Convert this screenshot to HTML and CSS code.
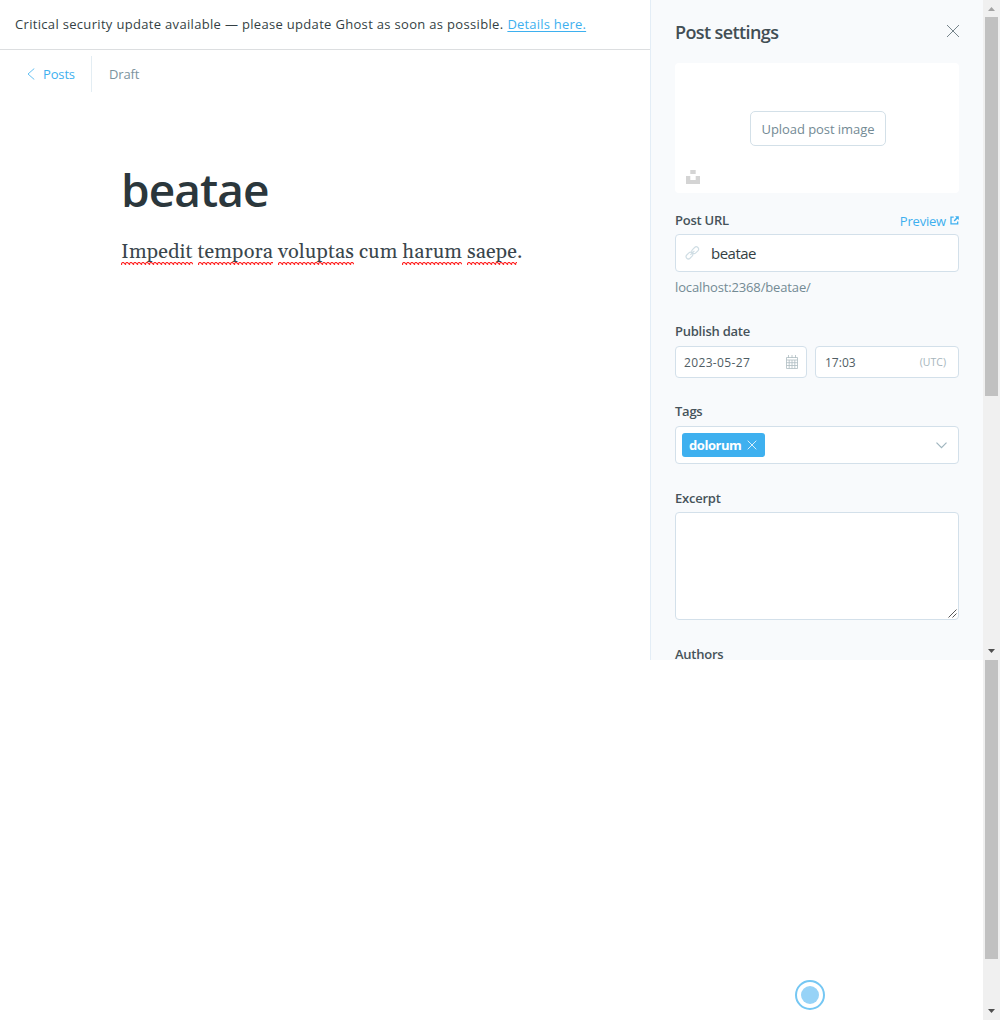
FILE: index.html
```html
<!DOCTYPE html>
<html lang="en">
<head>
<meta charset="utf-8">
<title>Post editor</title>
<link rel="stylesheet" href="styles.css">
</head>
<body>
<div class="app">
  <main class="editor">
    <div class="alert"><span class="alert-text">Critical security update available — please update Ghost as soon as possible.</span><a class="alert-link" href="#">Details here.</a></div>
    <header class="toolbar">
      <a class="back" href="#"><svg width="8" height="12" viewBox="0 0 8 12"><path d="M7.3.5 1 6l6.3 5.5" fill="none" stroke="#3eb0ef" stroke-width=".8"/></svg><span class="back-text">Posts</span></a>
      <span class="status">Draft</span>
    </header>
    <article class="post">
      <h1><span class="title">beatae</span></h1>
      <p class="body-text"><span class="misspelt">Impedit</span> <span class="misspelt">tempora</span> <span class="misspelt">voluptas</span> cum <span class="misspelt">harum</span> <span class="misspelt">saepe</span>.</p>
    </article>
  </main>
  <aside class="settings">
    <div class="settings-head"><h2>Post settings</h2><svg width="14" height="14" viewBox="0 0 14 14"><path d="m1 1 12 12M13 1 1 13" stroke="#54666d" stroke-width=".8"/></svg></div>
    <div class="uploader">
      <button class="upload" type="button"><span class="upload-text">Upload post image</span></button>
      <svg class="unsplash" width="14" height="14" viewBox="0 0 14 14"><path d="M4.3 0h5.4v4H4.3zM0 6h4.3v4h5.4V6H14v8H0z" fill="#d4d4d4"/></svg>
    </div>
    <div class="url-head"><span class="label l-url">Post URL</span><a class="preview" href="#"><span class="preview-text">Preview</span><svg width="9" height="9" viewBox="0 0 9 9"><path d="M3.7 1.2H1v6.7h6.7V5.4" fill="none" stroke="#3eb0ef" stroke-width="1.3"/><path d="M5 .2h3.8V4L7.4 2.7 4.7 5.4l-1-1 2.7-2.8z" fill="#3eb0ef"/></svg></a></div>
    <div class="field url-field"><svg width="15" height="14" viewBox="0 0 15 14"><g fill="none" stroke="#cfdde4" stroke-width="1.1"><rect x="-3.6" y="-2.3" width="7.6" height="4.6" rx="2.3" transform="translate(4.3 9.7) rotate(-45)"/><rect x="-3.8" y="-2.3" width="7.6" height="4.6" rx="2.3" transform="translate(10.2 4.2) rotate(-45)"/><path d="m5.4 8.8 4-4"/></g></svg><span class="url-value">beatae</span></div>
    <div class="hint"><span class="hint-text">localhost:2368/beatae/</span></div>
    <div class="label l-date"><span class="date-label">Publish date</span></div>
    <div class="dates">
      <div class="field date-field"><span class="date-value">2023-05-27</span><svg width="12" height="14" viewBox="0 0 12 14"><path d="M.5 2.5h11v11H.5zM.5 5h11M3.2 5v8.5M6 5v8.5M8.8 5v8.5M.5 7.7h11M.5 10.5h11M2.5 0v3M6 0v3M9.5 0v3" fill="none" stroke="#aebcc2" stroke-width=".8"/></svg></div>
      <div class="field time-field"><span class="time-value">17:03</span><span class="utc">(UTC)</span></div>
    </div>
    <div class="label l-tags"><span class="tags-label">Tags</span></div>
    <div class="field tags-field"><span class="tag"><span class="tag-text">dolorum</span><svg width="10" height="10" viewBox="0 0 10 10"><path d="m.7.7 8.6 8.6m0-8.6L.7 9.3" stroke="#fff" stroke-width=".8"/></svg></span><svg width="11" height="7" viewBox="0 0 11 7"><path d="m.5.7 5 5 5-5" fill="none" stroke="#9fb5be" stroke-width="1.2"/></svg></div>
    <div class="label l-excerpt"><span class="excerpt-label">Excerpt</span></div>
    <div class="field excerpt"><svg width="9" height="9" viewBox="0 0 9 9"><path d="m.5 8.5 8-8m-4 8 4-4" stroke="#444" stroke-width=".9"/></svg></div>
    <div class="label l-authors"><span class="authors-label">Authors</span></div>
  </aside>
  <div class="rail">
    <div class="scroll upper"><svg class="up" width="7" height="4" viewBox="0 0 7 4"><path d="m0 4 3.5-4L7 4z" fill="#a3a3a3"/></svg><i class="thumb"></i><svg width="7" height="4" viewBox="0 0 7 4"><path d="m0 0 3.5 4L7 0z" fill="#505050"/></svg></div>
    <div class="scroll lower"><i class="thumb"></i><svg width="7" height="4" viewBox="0 0 7 4"><path d="m0 0 3.5 4L7 0z" fill="#505050"/></svg></div>
  </div>
  <svg class="beacon" width="30" height="30" viewBox="0 0 30 30"><circle cx="15" cy="15" r="14" fill="#fff" stroke="#75c7f3" stroke-width="2"/><circle cx="15" cy="15" r="9" fill="#97d3f7"/></svg>
</div>
</body>
</html>
```
FILE: styles.css
```css
* { box-sizing: border-box; }
body { margin: 0; background: #fff; color: #343f44; font-family: "Open Sans", "Noto Sans", sans-serif; font-size: 13px; }
h1, h2, p { margin: 0; }
a { color: #3eb0ef; text-decoration: none; }
svg { display: block; flex: none; }
.app { position: relative; display: grid; grid-template-columns: 650px 333px 17px; width: 1000px; height: 1020px; overflow: hidden; white-space: nowrap; }
.alert { display: flex; gap: 4px; height: 50px; padding-left: 15px; border-bottom: 1px solid #dcdee0; line-height: 48px; letter-spacing: .32px; }
.alert-link { text-decoration: underline; text-underline-offset: 2px; letter-spacing: .21px; }
.toolbar { display: flex; height: 50px; padding: 6px 0 0 27px; line-height: 36px; letter-spacing: -.15px; }
.back { display: flex; align-items: center; gap: 8px; width: 65px; height: 36px; border-right: 1px solid #e3edf3; }
.status { margin-left: 17px; color: #7c939d; }
.post { padding: 60px 0 0 121px; }
h1 { height: 60px; line-height: 58px; font-size: 46px; font-weight: 600; letter-spacing: -.95px; color: #2b373c; }
.body-text { margin-top: 17px; line-height: 30px; font-family: Gelasio, Georgia, "DejaVu Serif", "Liberation Serif", serif; font-size: 20px; letter-spacing: .12px; color: #3a464c; }
.misspelt { background: url("data:image/svg+xml,%3Csvg xmlns='http://www.w3.org/2000/svg' width='4' height='3'%3E%3Cpath d='M-1 3.5 2 .5l3 3M-2 .5l3 3' transform='translate(0 -.5)' fill='none' stroke='%23f22' stroke-width='1.1'/%3E%3C/svg%3E") left bottom repeat-x; }
.settings { height: 660px; padding: 0 24px; overflow: hidden; border-left: 1px solid #e3edf6; background: #f8fafc; }
.settings-head { display: flex; align-items: center; justify-content: space-between; height: 63px; }
h2 { font-size: 18px; font-weight: 600; line-height: 24px; letter-spacing: -.6px; color: #424e54; }
.settings-head svg { margin: -1px -1px 0 0; }
.uploader { display: flex; flex-direction: column; width: 284px; height: 130px; padding: 48px 0 0 11px; border-radius: 4px; background: #fff; }
.upload { width: 136px; height: 35px; margin-left: 64px; padding: 1px 0 0; border: 1px solid #d3e0e8; border-radius: 5px; background: #fff; color: #738a94; font: 13px/32px "Open Sans", sans-serif; letter-spacing: -.06px; }
.unsplash { margin-top: 24px; }
.url-head { display: flex; justify-content: space-between; width: 284px; height: 41px; padding-top: 17px; line-height: 20px; }
.label { font-weight: 600; line-height: 20px; letter-spacing: -.24px; color: #46535a; }
.preview { display: flex; align-items: center; gap: 4px; padding-top: 1px; height: 20px; letter-spacing: -.2px; }
.field { display: flex; align-items: center; border: 1px solid #d3e0ea; border-radius: 4px; background: #fff; }
.url-field { width: 284px; height: 38px; padding-left: 9px; gap: 11px; font-size: 15px; letter-spacing: -.5px; }
.hint { height: 30px; line-height: 30px; color: #738a94; letter-spacing: -.14px; }
.l-date { padding-top: 19px; height: 44px; }
.dates { display: flex; gap: 8px; height: 32px; color: #4f5d64; font-size: 12px; }
.date-value { letter-spacing: .35px; }
.date-field, .time-field { justify-content: space-between; padding: 0 8px; width: 132px; }
.time-field { width: 144px; padding-right: 12px; padding-left: 9px; }
.utc { color: #a6b5bc; font-size: 10.5px; }
.l-tags { padding-top: 23px; height: 48px; }
.tags-field { width: 284px; height: 38px; padding: 0 11px 0 6px; justify-content: space-between; }
.tag { display: flex; align-items: center; gap: 6px; width: 83px; height: 24px; padding-left: 7px; border-radius: 3px; background: #3eb0ef; color: #fff; font-weight: 700; letter-spacing: -.45px; }
.l-excerpt { padding-top: 24px; height: 48px; }
.excerpt { width: 284px; height: 108px; padding: 1px; align-items: flex-end; justify-content: flex-end; }
.l-authors { padding-top: 24px; }
.rail { display: flex; flex-direction: column; }
.scroll { display: flex; flex-direction: column; align-items: center; justify-content: space-between; background: #f0f0f0; }
.upper { height: 660px; padding: 7px 0; }
.lower { height: 360px; padding-bottom: 7px; }
.thumb { width: 13px; background: #c1c1c1; }
.upper .thumb { height: 379px; margin-bottom: auto; margin-top: 6px; }
.lower .thumb { height: 299px; }
.beacon { position: absolute; left: 795px; top: 980px; }
```
